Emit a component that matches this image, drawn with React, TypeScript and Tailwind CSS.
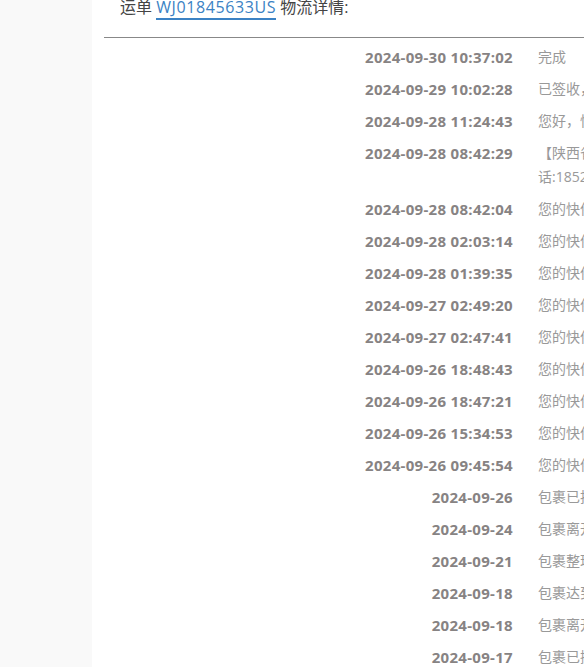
import React from 'react'

type Track = { time: string; text: string }

// tracking events, newest first
const tracks: Track[] = [
  { time: '2024-09-30 10:37:02', text: '完成' },
  { time: '2024-09-29 10:02:28', text: '已签收，签收人凭取货码签收。' },
  { time: '2024-09-28 11:24:43', text: '您好，快件已放至驿站，请凭取件码领取。' },
  {
    time: '2024-09-28 08:42:29',
    text: '【陕西省西安市雁塔区】快递员正在为您派件，如有疑问请联系快递员，电话:18523456789',
  },
  { time: '2024-09-28 08:42:04', text: '您的快件已到达西安雁塔营业点' },
  { time: '2024-09-28 02:03:14', text: '您的快件已离开西安转运中心' },
  { time: '2024-09-28 01:39:35', text: '您的快件已到达西安转运中心' },
  { time: '2024-09-27 02:49:20', text: '您的快件已离开广州转运中心' },
  { time: '2024-09-27 02:47:41', text: '您的快件已到达广州转运中心' },
  { time: '2024-09-26 18:48:43', text: '您的快件已清关完成' },
  { time: '2024-09-26 18:47:21', text: '您的快件正在清关' },
  { time: '2024-09-26 15:34:53', text: '您的快件已到达目的国' },
  { time: '2024-09-26 09:45:54', text: '您的快件已交航' },
  { time: '2024-09-26', text: '包裹已抵达目的国机场' },
  { time: '2024-09-24', text: '包裹离开始发地机场' },
  { time: '2024-09-21', text: '包裹整理完毕，等待出运' },
  { time: '2024-09-18', text: '包裹达到转运仓库' },
  { time: '2024-09-18', text: '包裹离开揽收点' },
  { time: '2024-09-17', text: '包裹已揽收' },
]

export default function App() {
  return (
    <div className="flex w-[584px] h-[667px] overflow-hidden bg-white font-['Open_Sans','Noto_Sans_CJK_SC',sans-serif]">
      <aside className="w-[92px] shrink-0 bg-[#f9f9f9]" />
      <main className="flex-1 pl-3">
        <h2 className="mt-[-5px] pl-4 text-[16px] leading-6 font-normal text-[#444] whitespace-nowrap">
          运单{' '}
          <a href="#" className="tracking-[0.6px] text-[#3b82c4] border-b-2 border-[#3b82c4]">
            WJ01845633US
          </a>{' '}
          物流详情:
        </h2>
        <div className="mt-[18px] border-t border-[#888]" />
        <div className="mt-[3px]">
          {tracks.map((t, i) => (
            <div key={i} className="flex py-1 text-[14px] leading-6">
              <div className="w-[409px] shrink-0 text-right text-[15px] tracking-[0.3px] font-bold text-[#878383]">
                {t.time}
              </div>
              <div className="w-[495px] shrink-0 pl-[25px] text-[#999]">{t.text}</div>
            </div>
          ))}
        </div>
      </main>
    </div>
  )
}
